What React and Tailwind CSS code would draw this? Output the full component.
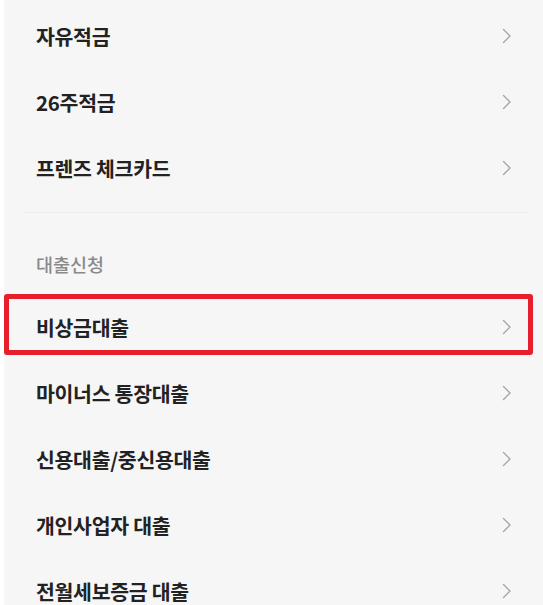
const savings = ['자유적금', '26주적금', '프렌즈 체크카드'];
const loans = ['비상금대출', '마이너스 통장대출', '신용대출/중신용대출', '개인사업자 대출', '전월세보증금 대출'];

const Chevron = () => (
  <svg width="10" height="16" viewBox="0 0 10 16" fill="none" className="shrink-0">
    <path d="M1.5 1.5 L8 8 L1.5 14.5" stroke="#a3a3a3" strokeWidth="1.3" strokeLinecap="round" strokeLinejoin="round" />
  </svg>
);

const Row = ({ label, highlight }) => (
  <div className="relative flex items-center justify-between h-[66px] pl-[32px] pr-[31px]">
    <span className="text-[20.5px] font-bold text-[#222] tracking-[-0.3px] leading-none">{label}</span>
    <Chevron />
    {highlight && (
      <div className="absolute left-0 right-[10px] top-0 h-[61px] border-[5px] border-[#e61f2b] rounded-[3px] pointer-events-none" />
    )}
  </div>
);

export default function App() {
  return (
    <div
      className="w-[543px] h-[605px] overflow-hidden bg-white"
      style={{ fontFamily: '"Noto Sans CJK KR", "Noto Sans", sans-serif' }}
    >
      <div className="ml-[4px] h-full bg-[#f6f6f6] pt-[3px]">
        {savings.map((s) => (
          <Row key={s} label={s} />
        ))}
        <div className="mt-[11px] ml-[20px] mr-[16px] h-px bg-[#ececec]" />
        <div className="flex items-center pl-[32px] pt-[40px] pb-[19px] h-[81px]">
          <span className="text-[18.5px] text-[#8a8a8a] font-medium leading-none">대출신청</span>
        </div>
        {loans.map((l, i) => (
          <Row key={l} label={l} highlight={i === 0} />
        ))}
      </div>
    </div>
  );
}
